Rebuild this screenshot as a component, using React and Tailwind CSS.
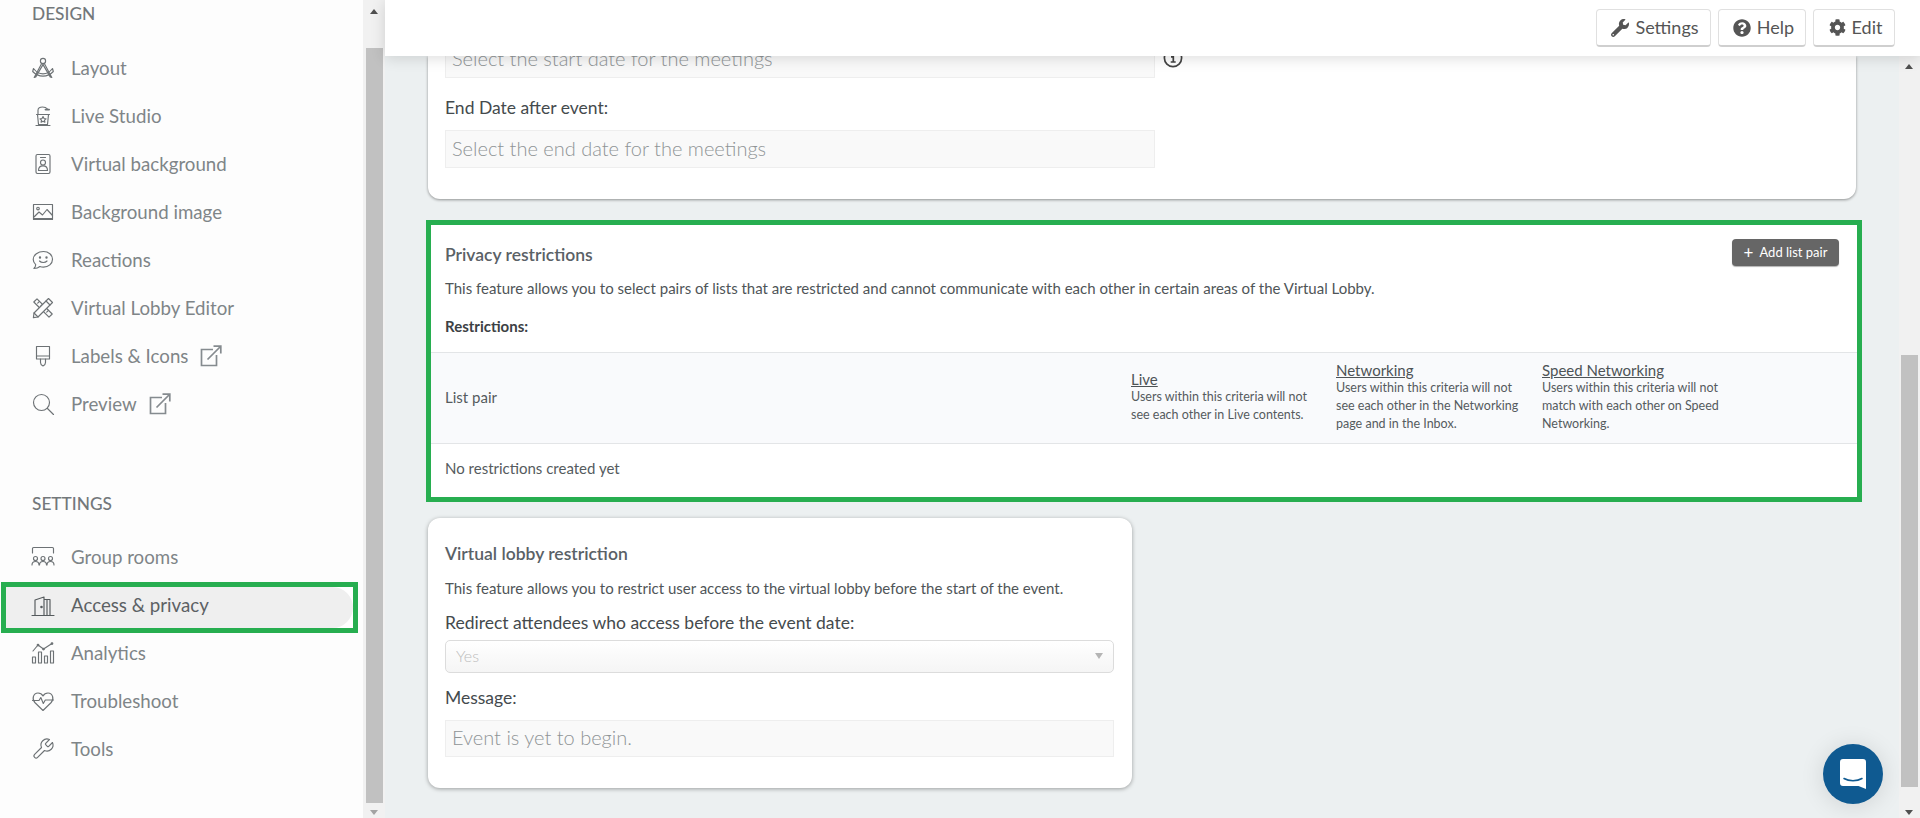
import React from "react";
import { FaWrench, FaQuestionCircle, FaCog } from "react-icons/fa";

const font = { fontFamily: '"Lato", "Open Sans", sans-serif' };

function Ico({ children, className = "" }) {
  return (
    <svg viewBox="0 0 24 24" fill="none" stroke="currentColor" strokeWidth="1.15" strokeLinecap="round" strokeLinejoin="round" className={"w-[24px] h-[24px] shrink-0 " + className}>
      {children}
    </svg>
  );
}

const icons = {
  layout: (
    <Ico>
      <circle cx="12" cy="5" r="2.6" />
      <path d="M10.800 7.300 3.200 21.500l1.600-.6L12.600 7.600M13.200 7.300l7.600 14.200-1.600-.6L11.400 7.600" />
      <path d="M2.500 12.500c2.600 3.500 6 5.400 9.500 5.400s6.900-1.900 9.500-5.400l.8 3c-2.800 3-6.500 4.600-10.300 4.600s-7.500-1.600-10.300-4.600z" />
    </Ico>
  ),
  studio: (
    <Ico>
      <path d="M6.500 10.500h11l-1 10h-9z" />
      <path d="M5 21.500h14M5.500 10.500h13" />
      <path d="M7 10V6.200C7 4 9 3 11.500 3s4 .8 5 2" />
      <path d="M14.500 5.600h3.600" strokeWidth="1.8" />
      <path d="m12 12.600 1 1.900 2 .3-1.500 1.400.4 2-1.900-1-1.900 1 .4-2L9 14.800l2-.3z" />
    </Ico>
  ),
  virtual: (
    <Ico>
      <rect x="5" y="2.500" width="14" height="19" rx="1.400" />
      <path d="M9.500 5.500h5" />
      <circle cx="12" cy="10.500" r="2.500" />
      <path d="M7.500 18.500c0-3 2-4.600 4.500-4.600s4.500 1.600 4.500 4.600z" />
    </Ico>
  ),
  image: (
    <Ico>
      <rect x="2.500" y="4.500" width="19" height="15" />
      <circle cx="7" cy="8.500" r="1.300" />
      <path d="m3 17 5-5 3.500 3L16 9.500l5.500 6M3 18.500h18" />
    </Ico>
  ),
  reactions: (
    <Ico>
      <path d="M12.500 3.500c5 0 9 3.300 9 7.800s-4 7.800-9 7.800c-1.300 0-2.500-.2-3.600-.6-1.400 1.300-3.500 2-6 2 1.100-1 1.700-2.300 1.800-3.800-1.500-1.400-2.500-3.300-2.500-5.400 0-4.500 5-7.800 10.300-7.800z" />
      <path d="M8.500 13c1.800 2 5.700 2 7.500 0" />
      <circle cx="9" cy="9.500" r=".6" fill="currentColor" />
      <circle cx="15.500" cy="9.500" r=".6" fill="currentColor" />
    </Ico>
  ),
  lobby: (
    <Ico>
      <path d="m6 2.800-3.200 3.200 15.200 15.200 3.200-3.200z" />
      <path d="m8.500 5.300-1.800 1.800M11.500 8.300l-1.800 1.800M14.500 11.300l-1.800 1.800M17.500 14.300l-1.800 1.800" />
      <path d="m17.500 2.500 4 4L7 21l-4.600.6L3 17z" fill="#fdfdfd" />
      <path d="m15 5 4 4M3 17l4 4" />
    </Ico>
  ),
  labels: (
    <Ico>
      <path d="M5.500 2.500h13v12.500h-13z" />
      <path d="M5.500 12h13M9.500 15v3.500c0 1.400 1 2.800 2.500 3.500 1.500-.7 2.500-2.100 2.500-3.500V15" />
    </Ico>
  ),
  preview: (
    <Ico>
      <circle cx="10.500" cy="10.500" r="8" />
      <path d="m16.500 16.500 6 6" />
    </Ico>
  ),
  rooms: (
    <Ico>
      <path d="M1.500 8V3.500a1 1 0 0 1 1-1h19a1 1 0 0 1 1 1V8" />
      <circle cx="4.500" cy="13.500" r="2" />
      <circle cx="12" cy="13.500" r="2" />
      <circle cx="19.500" cy="13.500" r="2" />
      <path d="M1 20c0-2.500 1.500-3.500 3.500-3.500S8 17.500 8 20M8.500 20c0-2.500 1.500-3.500 3.500-3.500s3.500 1 3.500 3.500M16 20c0-2.500 1.500-3.500 3.500-3.500S23 17.500 23 20" />
    </Ico>
  ),
  access: (
    <Ico>
      <path d="M1 21.500h22" />
      <path d="M4 21.500V6l9-3v18.500M13 5.500h6v16M16 5.500v16" />
      <circle cx="10.500" cy="13" r=".7" fill="currentColor" />
    </Ico>
  ),
  analytics: (
    <Ico>
      <rect x="1.500" y="16" width="3" height="6" />
      <rect x="7.500" y="11" width="3" height="11" />
      <rect x="13.500" y="15" width="3" height="7" />
      <rect x="19.500" y="10" width="3" height="12" />
      <path d="m2 10 5-6 5.500 4L21 2.500" />
      <circle cx="7" cy="4" r=".8" fill="currentColor" />
      <circle cx="12.500" cy="8" r=".8" fill="currentColor" />
      <circle cx="21" cy="2.500" r=".8" fill="currentColor" />
    </Ico>
  ),
  trouble: (
    <Ico>
      <path d="M12 21.500 3.800 13.500C.6 10 2.300 4 7 4c2.300 0 4 1.200 5 3 1-1.800 2.700-3 5-3 4.700 0 6.400 6 3.200 9.500z" />
      <path d="M1.500 11.500h6.500l1.800-3 2.500 6 2-3.500h8.200" fill="#fdfdfd" />
    </Ico>
  ),
  tools: (
    <Ico>
      <path d="M14.700 6.300a1 1 0 0 0 0 1.400l1.600 1.600a1 1 0 0 0 1.400 0l3.770-3.770a6 6 0 0 1-7.940 7.940l-6.910 6.910a2.120 2.120 0 0 1-3-3l6.910-6.910a6 6 0 0 1 7.940-7.940l-3.760 3.760z" />
    </Ico>
  ),
};

function ExternalMark() {
  return (
    <svg viewBox="0 0 22 22" fill="none" stroke="currentColor" strokeWidth="1.700" className="w-[22px] h-[22px] ml-[12px] text-[#858b8f]">
      <path d="M13 4.500H1.500v16h15V10" />
      <path d="M7.500 14.500 20.500 1.500M13.500 1.200h7.300v7.300" />
    </svg>
  );
}

function NavItem({ icon, label, external }) {
  return (
    <div className="flex items-center h-[48px] pl-[31px]">
      <span className="w-[40px] text-[#6d7275]">{icons[icon]}</span>
      <span className="text-[18.7px] text-[#7f8588] leading-none">{label}</span>
      {external && <ExternalMark />}
    </div>
  );
}

function Sidebar() {
  return (
    <div className="w-[385px] h-full flex shrink-0">
      <nav className="w-[363px] h-full bg-[#fdfdfd]">
        <div className="pl-[32px] pt-[1px] h-[26px] leading-[26px] text-[17.3px] font-medium text-[#73787b]">DESIGN</div>
        <div className="mt-[18px]">
          <NavItem icon="layout" label="Layout" />
          <NavItem icon="studio" label="Live Studio" />
          <NavItem icon="virtual" label="Virtual background" />
          <NavItem icon="image" label="Background image" />
          <NavItem icon="reactions" label="Reactions" />
          <NavItem icon="lobby" label="Virtual Lobby Editor" />
          <NavItem icon="labels" label="Labels & Icons" external />
          <NavItem icon="preview" label="Preview" external />
        </div>
        <div className="mt-[62px] pl-[32px] pt-[1px] h-[26px] leading-[26px] text-[17.3px] font-medium text-[#73787b]">SETTINGS</div>
        <div className="mt-[17px]">
          <NavItem icon="rooms" label="Group rooms" />
          <div className="mt-[1px] -mb-[4px] ml-[1px] w-[357px] h-[51px] border-[5px] border-[#27ae50] bg-white">
            <div className="h-full w-[347px] bg-[#efefef] rounded-r-[24px] flex items-center pl-[25px] pb-[4px]">
              <span className="w-[40px] text-[#555a5d]">{icons.access}</span>
              <span className="text-[18.7px] text-[#5c6164] leading-none">Access &amp; privacy</span>
            </div>
          </div>
          <NavItem icon="analytics" label="Analytics" />
          <NavItem icon="trouble" label="Troubleshoot" />
          <NavItem icon="tools" label="Tools" />
        </div>
      </nav>
      <ScrollTrack thumbTop={48} thumbHeight={755} width="w-[22px]" />
    </div>
  );
}

function ScrollTrack({ thumbTop, thumbHeight, width }) {
  return (
    <div className={width + " h-full bg-[#f1f1f1] flex flex-col items-center relative shrink-0"}>
      <div className="absolute top-[9px] w-0 h-0 border-x-[4px] border-x-transparent border-b-[5px] border-b-[#505050]" />
      <div className="w-[17px] bg-[#c1c1c1]" style={{ marginTop: thumbTop, height: thumbHeight }} />
      <div className="absolute bottom-[3px] w-0 h-0 border-x-[4px] border-x-transparent border-t-[5px] border-t-[#a3a3a3]" />
    </div>
  );
}

function HeadButton({ icon, label, width }) {
  return (
    <button className={"h-[38px] bg-white border border-[#e0e0e0] border-b-[2px] border-b-[#cfcfcf] rounded-[4px] flex items-center justify-center gap-[6px] pl-[3px] text-[18px] text-[#555] " + width}>
      {icon}
      {label}
    </button>
  );
}

function Header() {
  return (
    <header className="relative z-10 h-[56px] bg-white shadow-[0_2px_14px_rgba(0,0,0,0.14)] flex items-center justify-end gap-[7px] pr-[25px] shrink-0">
      <HeadButton width="w-[115px]" label="Settings" icon={<FaWrench className="w-[18px] h-[18px]" />} />
      <HeadButton width="w-[88px]" label="Help" icon={<FaQuestionCircle className="w-[18px] h-[18px]" />} />
      <HeadButton width="w-[82px]" label="Edit" icon={<FaCog className="w-[17px] h-[17px]" />} />
    </header>
  );
}

function TextField({ text, height = "h-[38px]", extra = "" }) {
  return (
    <div className={"w-[710px] bg-[#f9f9f9] border border-[#eeeeee] flex items-center pl-[6px] pb-[3px] text-[20px] font-light text-[#8f9496] " + height + " " + extra}>
      {text}
    </div>
  );
}

function RestrictionColumn({ title, children }) {
  return (
    <div className="w-[185px]">
      <div className="text-[15px] leading-[18px] underline text-[#4d5356]">{title}</div>
      <div className="text-[12.5px] leading-[18px] text-[#555b5e]">{children}</div>
    </div>
  );
}

function MeetingCard() {
  return (
    <section className="flow-root w-[1428px] h-[143px] bg-white rounded-b-[12px] shadow-[0_1px_3px_rgba(0,0,0,0.4)] pl-[17px]">
      <div className="flex items-center -mt-[16px]">
        <TextField text="Select the start date for the meetings" />
        <svg viewBox="0 0 20 20" className="w-[20px] h-[20px] ml-[8px] -mt-[2px] text-[#444]" fill="none" stroke="currentColor" strokeWidth="1.700">
          <circle cx="10" cy="10" r="8.600" />
          <path d="M8 8.800h2.300v5M7.700 14h5M10 5v1.800" />
        </svg>
      </div>
      <div className="mt-[18px] h-[24px] leading-[24px] text-[17.500px] text-[#444a4d]">End Date after event:</div>
      <TextField text="Select the end date for the meetings" extra="mt-[10px]" />
    </section>
  );
}

function PrivacyCard() {
  return (
    <section className="mt-[21px] -ml-[2px] w-[1436px] h-[282px] bg-white border-[5px] border-[#27ae50] flex flex-col">
      <div className="pl-[14px] pr-[18px] flex justify-between pt-[14px]">
        <div className="mt-[4px] h-[24px] leading-[24px] text-[17.500px] font-semibold text-[#5a6166]">Privacy restrictions</div>
        <button className="h-[27px] w-[107px] bg-[#666666] rounded-[4px] shadow-[0_1px_1px_rgba(0,0,0,0.3)] text-white text-[13px] flex items-center justify-center gap-[6px]">
          <span className="text-[17px] leading-none">+</span>
          Add list pair
        </button>
      </div>
      <p className="pl-[14px] mt-[11px] h-[20px] leading-[20px] text-[15px] text-[#4f5558]">
        This feature allows you to select pairs of lists that are restricted and cannot communicate with each other in certain areas of the Virtual Lobby.
      </p>
      <div className="pl-[14px] mt-[18px] h-[20px] leading-[20px] text-[15px] font-bold text-[#3c4144]">Restrictions:</div>
      <div className="mt-[16px] h-[92px] pb-[2px] bg-[#f9fafc] border-y border-[#e3e5e7] grid grid-cols-[686px_205px_206px_1fr] items-center pl-[14px] text-[15px] text-[#555b5e]">
        <div>List pair</div>
        <RestrictionColumn title="Live">
          Users within this criteria will not see each other in Live contents.
        </RestrictionColumn>
        <RestrictionColumn title="Networking">
          Users within this criteria will not see each other in the Networking page and in the Inbox.
        </RestrictionColumn>
        <RestrictionColumn title="Speed Networking">
          Users within this criteria will not match with each other on Speed Networking.
        </RestrictionColumn>
      </div>
      <div className="flex-1 flex items-center pl-[14px] pb-[5px] text-[15px] text-[#555b5e]">No restrictions created yet</div>
    </section>
  );
}

function LobbyCard() {
  return (
    <section className="mt-[16px] w-[704px] h-[270px] bg-white rounded-[12px] shadow-[0_1px_4px_rgba(0,0,0,0.35)] pl-[17px] pr-[18px] pt-[24px]">
      <div className="h-[24px] leading-[24px] text-[17.500px] font-semibold text-[#5a6166]">Virtual lobby restriction</div>
      <p className="mt-[12px] h-[20px] leading-[20px] text-[15px] text-[#4f5558]">
        This feature allows you to restrict user access to the virtual lobby before the start of the event.
      </p>
      <div className="mt-[13px] h-[24px] leading-[24px] text-[17.500px] text-[#444a4d]">Redirect attendees who access before the event date:</div>
      <div className="mt-[5px] h-[33px] pb-[2px] border border-[#dcdcdc] rounded-[5px] bg-gradient-to-b from-white to-[#f5f5f5] flex items-center justify-between px-[10px] text-[16px] font-light text-[#bdbdbd]">
        Yes
        <span className="w-0 h-0 border-x-[4px] border-x-transparent border-t-[6px] border-t-[#b5b5b5]" />
      </div>
      <div className="mt-[13px] h-[24px] leading-[24px] text-[17.500px] text-[#444a4d]">Message:</div>
      <TextField text="Event is yet to begin." height="h-[37px]" extra="mt-[10px] !w-full" />
    </section>
  );
}

export default function App() {
  return (
    <div className="w-full h-[818px] flex overflow-hidden relative bg-[#ecf0f1]" style={font}>
      <Sidebar />
      <div className="flex-1 h-full flex flex-col min-w-0">
        <Header />
        <div className="flex-1 flex min-h-0">
          <main className="flex-1 overflow-hidden pl-[43px]">
            <MeetingCard />
            <PrivacyCard />
            <LobbyCard />
          </main>
          <div className="w-[21px] h-full bg-[#f1f1f1] relative shrink-0">
            <div className="absolute top-[8px] left-[6px] w-0 h-0 border-x-[4px] border-x-transparent border-b-[5px] border-b-[#505050]" />
            <div className="absolute top-[299px] left-[2px] w-[17px] h-[432px] bg-[#c1c1c1]" />
            <div className="absolute bottom-[3px] left-[6px] w-0 h-0 border-x-[4px] border-x-transparent border-t-[5px] border-t-[#505050]" />
          </div>
        </div>
      </div>
      <button className="absolute left-[1823px] top-[744px] w-[60px] h-[60px] rounded-full bg-[#0f5a91] shadow-[0_2px_24px_rgba(0,0,0,0.12)] flex items-center justify-center z-20">
        <svg viewBox="0 0 26 30" className="w-[26px] h-[30px]">
          <path d="M3 0h20a3 3 0 0 1 3 3v27l-7.500-3H3a3 3 0 0 1-3-3V3a3 3 0 0 1 3-3z" fill="#fff" />
          <path d="M4 19.500c5 3 13 3 18 0" fill="none" stroke="#0f5a91" strokeWidth="1.500" strokeLinecap="round" />
        </svg>
      </button>
    </div>
  );
}
